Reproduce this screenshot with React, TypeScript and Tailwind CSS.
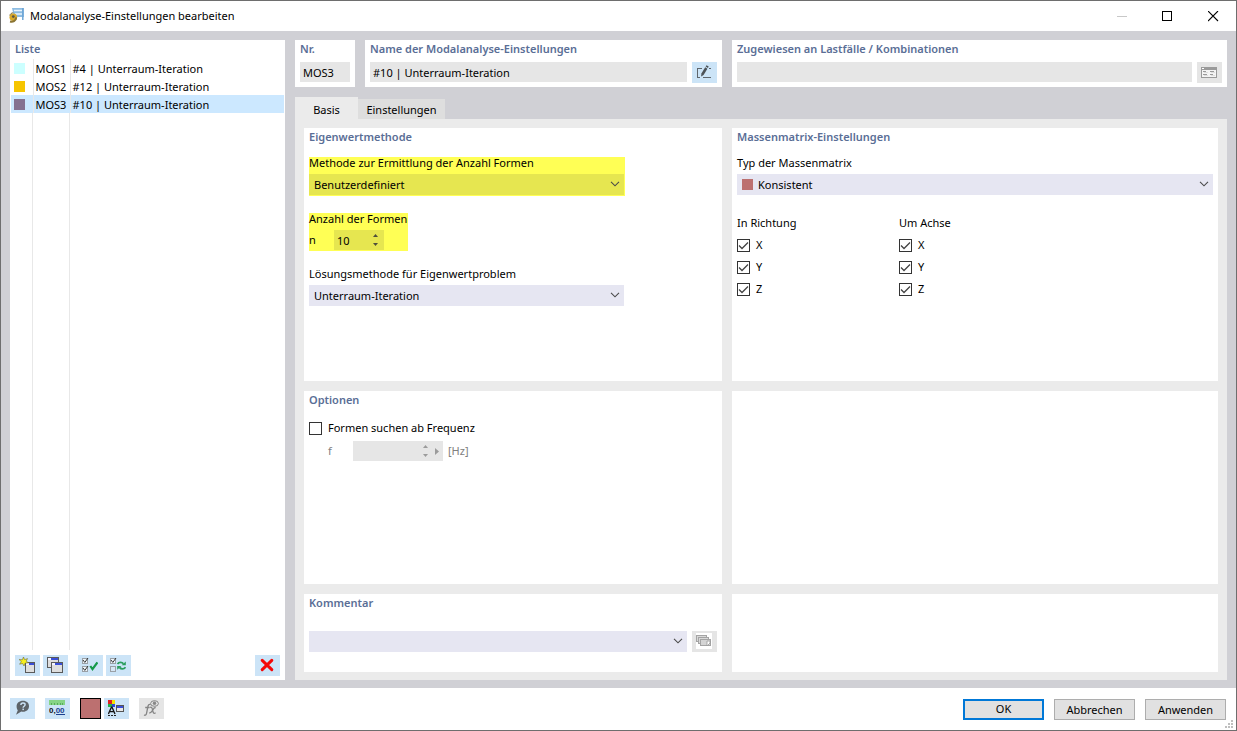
import React, { useState } from "react";

function Icon({ children, smooth }: { children: React.ReactNode; smooth?: boolean }) {
  return (
    <svg
      viewBox="0 0 16 16"
      className="block h-4 w-4"
      fill="none"
      aria-hidden="true"
      shapeRendering={smooth ? "auto" : "crispEdges"}
    >
      {children}
    </svg>
  );
}

function MiniWindow({ x, y, w, h }: { x: number; y: number; w: number; h: number }) {
  return (
    <g>
      <rect x={x + 0.5} y={y + 0.5} width={w - 1} height={h - 1} fill="#dedede" stroke="#5a5a5a" />
      <rect x={x + 1} y={y + 1} width={w - 2} height="2" fill="#f4f4ff" />
      <rect x={x + 4} y={y + 1} width={w - 5} height="2" fill="#3a4fd8" />
    </g>
  );
}

function TinyCheck({ x, y, checked }: { x: number; y: number; checked?: boolean }) {
  return (
    <g>
      <rect x={x + 0.5} y={y + 0.5} width="5" height="5" fill={checked ? "#eef5fb" : "#d5e6f5"} stroke="#9aa0a6" />
      {checked && (
        <path d={`M${x + 1} ${y + 2}l1.800 2.400L${x + 6} ${y}`} stroke="#333" strokeWidth="1" shapeRendering="auto" />
      )}
    </g>
  );
}

function NewIcon() {
  return (
    <Icon>
      <MiniWindow x={6} y={5} w={10} h={11} />
      <path
        d="M4.500 0L5.600 2.600l2.900-1-1.300 2.600L9.400 5.800l-3.200.3L5 9 3.600 6.500.6 7.200l1.700-2.500L0 2.400l3.300.4z"
        fill="#f7f01d"
        stroke="#6b6a3a"
        strokeWidth="0.600"
        shapeRendering="auto"
      />
    </Icon>
  );
}

function CopyIcon() {
  return (
    <Icon>
      <MiniWindow x={0} y={0} w={12} h={11} />
      <MiniWindow x={4} y={5} w={12} h={11} />
    </Icon>
  );
}

function CheckAllIcon() {
  return (
    <Icon>
      <TinyCheck x={0} y={1} checked />
      <TinyCheck x={0} y={9} checked />
      <path d="M8.300 9l2.200 3.200L15.400 5.400" stroke="#169a4a" strokeWidth="2.200" shapeRendering="auto" />
    </Icon>
  );
}

function InvertIcon() {
  return (
    <Icon>
      <TinyCheck x={0} y={1} checked />
      <TinyCheck x={0} y={9} />
      <g shapeRendering="auto">
        <path d="M7.500 7c1.500-2.200 4.500-2.200 6-.2" stroke="#2a9d5c" strokeWidth="1.800" />
        <path d="M15.800 4.400v3.800h-4.200z" fill="#2a9d5c" />
        <path d="M15.500 10.200c-1.500 2.200-4.500 2.200-6 .2" stroke="#2a9d5c" strokeWidth="1.800" />
        <path d="M7.200 12.800V9h4.200z" fill="#2a9d5c" />
      </g>
    </Icon>
  );
}

function DeleteIcon() {
  return (
    <Icon smooth>
      <path d="M3.200 3.400L12.800 12.600M12.800 3.400L3.200 12.600" stroke="#f40808" strokeWidth="3" strokeLinecap="round" />
    </Icon>
  );
}

function HelpIcon() {
  return (
    <Icon smooth>
      <path
        d="M9 .8c3.700 0 6 2.400 6 5.400s-2.300 5.500-6 5.500c-.6 0-1.200-.1-1.700-.2L2 14.800l1.800-4.600C3 9.200 2.600 7.800 2.600 6.200 2.600 3.200 5.300.8 9 .8z"
        fill="#5d6368"
      />
      <path d="M6.900 4.900c0-1.300.9-1.900 2.100-1.900s2.100.7 2.100 1.700c0 1.500-2 1.500-2 3" stroke="#cce4f7" strokeWidth="1.400" />
      <rect x="8.400" y="8.600" width="1.500" height="1.500" fill="#cce4f7" />
    </Icon>
  );
}

function UnitsIcon() {
  return (
    <svg viewBox="0 0 18 16" className="block h-4 w-[18px]" aria-hidden="true">
      <g shapeRendering="crispEdges">
        <rect x="0" y="0" width="16" height="5" fill="#86d486" />
        <path d="M2.500 3v2M5.500 3v2M8.500 3v2M11.500 3v2M13.500 3v2" stroke="#57ab5c" />
        <path d="M7 14.500h9" stroke="#1c3f8f" />
      </g>
      <text x="0" y="13" fontSize="8" fontWeight="700" fontFamily="Liberation Sans, sans-serif" fill="#111">
        0,<tspan fill="#1c3f8f">00</tspan>
      </text>
    </svg>
  );
}

function DisplayIcon() {
  return (
    <svg viewBox="1 0 18 17" className="block h-[17px] w-[18px]" fill="none" aria-hidden="true">
      <g shapeRendering="crispEdges">
        <rect x="1" y="0" width="4" height="4" fill="#e02020" />
        <rect x="5" y="0" width="3" height="4" fill="#f5e400" />
        <rect x="1" y="4" width="4" height="3" fill="#22b14c" />
        <rect x="5" y="4" width="3" height="3" fill="#2f48d8" />
        <rect x="9.500" y="5.500" width="7" height="6" fill="#e9e9e9" stroke="#555" />
        <rect x="10" y="6" width="6" height="2" fill="#3a4fd8" />
        <path d="M1 15.500h2M4 15.500h2M7 15.500h2" stroke="#222" />
      </g>
      <path d="M1.400 14L4.400 7.200h.6L8 14M2.400 11.600h4.400" stroke="#111" strokeWidth="1.300" />
    </svg>
  );
}

function FormulaIcon() {
  return (
    <svg viewBox="0 0 17 17" className="block h-[17px] w-[17px]" fill="none" stroke="#858585" aria-hidden="true">
      <path d="M7.600 4.800C6 3.800 5.200 5 4.800 7l-1.200 6.200c-.4 1.900-1.300 2.400-2.600 1.800M2.200 7.500h4.400" strokeWidth="1.300" />
      <path d="M6.800 7.500c1.800-.9 2.400.2 2.900 2.900s1 3.700 2.900 2.300M12.700 7.500c-1.700-.2-2.400 1.400-3.300 3s-1.700 2.700-3.200 2.400" strokeWidth="1.300" />
      <ellipse cx="11.500" cy="3.500" rx="3.900" ry="2.800" />
      <circle cx="11.500" cy="3.300" r="1.300" fill="#858585" />
    </svg>
  );
}

function EditIcon() {
  return (
    <svg viewBox="1 0 18 16" className="block h-4 w-[18px]" fill="none" aria-hidden="true">
      <path d="M7 4.500H2.500v9H5M8 13.500h8M13.500 4.500h2" stroke="#5f666c" shapeRendering="crispEdges" />
      <path d="M6.400 9.500l3.800-6.200 2.200 1.400-3.800 6.200-2.500 1.500z" fill="#4c5257" />
      <path d="M10.700 2.500l.8-1.300 2.200 1.400-.8 1.300z" fill="#4c5257" />
    </svg>
  );
}

function DialogIcon() {
  return (
    <Icon>
      <rect x="0.500" y="3.500" width="15" height="10" fill="#f4f4f4" stroke="#9a9a9a" />
      <rect x="0" y="3" width="16" height="3" fill="#9a9a9a" />
      <rect x="1" y="4" width="2" height="1" fill="#fff" />
      <path d="M2 7.500h3M9 7.500h4M2 10.500h4M9 10.500h3" stroke="#9a9a9a" />
      <path d="M3 8.500h4M10 8.500h4M3 11.500h4M10 11.500h4" stroke="#dedede" />
    </Icon>
  );
}

function CommentIcon() {
  return (
    <Icon>
      <rect width="16" height="16" fill="#fff" />
      <rect x="0.500" y="2.500" width="10" height="6" fill="#d8d8d8" stroke="#a4a4a4" />
      <rect x="2.500" y="4.500" width="10" height="6" fill="#d8d8d8" stroke="#a4a4a4" />
      <rect x="4.500" y="6.500" width="10" height="6" fill="#d4d4d4" stroke="#a4a4a4" />
      <path d="M11 8h3v2l-3 3z" fill="#fff" stroke="#9a9a9a" strokeWidth="0.800" shapeRendering="auto" />
    </Icon>
  );
}

function AppIcon() {
  return (
    <Icon smooth>
      <path d="M3 0h12v9H5z" fill="#8dbce2" />
      <path d="M5 2.500h8M6 6h7" stroke="#eaf4fc" strokeWidth="1.500" />
      <path d="M13.800 0v12" stroke="#6fa6d6" strokeWidth="1.500" />
      <circle cx="4.300" cy="9.200" r="3.800" fill="#d9a928" />
      <path d="M1 13.600c3 .6 5.800-.4 6.200-4.300" stroke="#8a7434" strokeWidth="2" />
      <circle cx="4.300" cy="8.600" r="1.400" fill="#5b5646" />
      <path d="M0.800 7.500c.5-1.800 1.800-2.700 3.500-2.700" stroke="#7a6a35" />
    </Icon>
  );
}

function IconButton({
  label,
  disabled,
  children,
}: {
  label: string;
  disabled?: boolean;
  children: React.ReactNode;
}) {
  return (
    <button
      type="button"
      aria-label={label}
      disabled={disabled}
      className={`flex h-[21px] w-[25px] shrink-0 items-start pl-1 pt-[2px] ${
        disabled ? "bg-[#e5e5e5]" : "bg-[#cce4f7]"
      }`}
    >
      {children}
    </button>
  );
}

function Heading({ children }: { children: React.ReactNode }) {
  return <h2 className="h-[19px] text-[11px] font-semibold leading-[17px] text-[#5a6e96]">{children}</h2>;
}

function Panel({ title, children }: { title?: string; children?: React.ReactNode }) {
  return (
    <section className="min-w-0 bg-white px-[5px]">
      {title && <Heading>{title}</Heading>}
      {children}
    </section>
  );
}

function Dropdown({
  id,
  label,
  options,
  highlighted,
  swatch,
}: {
  id: string;
  label?: string;
  options: string[];
  highlighted?: boolean;
  swatch?: boolean;
}) {
  return (
    <div className="relative min-w-0 flex-1">
      <select
        id={id}
        aria-label={label}
        className={`block h-[21px] w-full appearance-none pr-6 pt-px outline-none ${
          highlighted ? "bg-[#e6e650]" : "bg-[#e6e6f2]"
        } ${swatch ? "pl-[21px]" : "pl-[5px]"}`}
      >
        {options.map((o) => (
          <option key={o}>{o}</option>
        ))}
      </select>
      {swatch && <span className="pointer-events-none absolute left-[5px] top-[5px] h-[11px] w-[11px] bg-[#bc7070]" />}
      <svg viewBox="0 0 10 6" className="pointer-events-none absolute right-1 top-[7px] h-[6px] w-[10px]" fill="none" aria-hidden="true">
        <path d="M1 .8l4 4 4-4" stroke="#4a4a4a" strokeWidth="1.100" />
      </svg>
    </div>
  );
}

function SpinArrows({ disabled }: { disabled?: boolean }) {
  const fill = disabled ? "#9b9b9b" : "#4e4e3c";
  return (
    <span className="flex w-3 flex-col justify-center gap-1">
      <button type="button" aria-label="Erhöhen" disabled={disabled} className="flex h-1 justify-center">
        <svg viewBox="0 0 5 3" className="h-[3px] w-[5px]">
          <path d="M0 3L2.500 0 5 3z" fill={fill} />
        </svg>
      </button>
      <button type="button" aria-label="Verringern" disabled={disabled} className="flex h-1 items-end justify-center">
        <svg viewBox="0 0 5 3" className="h-[3px] w-[5px]">
          <path d="M0 0L2.500 3 5 0z" fill={fill} />
        </svg>
      </button>
    </span>
  );
}

function CheckBox({ label, defaultChecked }: { label: string; defaultChecked?: boolean }) {
  return (
    <label className="flex h-[22px] items-center gap-[6px]">
      <span className="relative block h-[13px] w-[13px]">
        <input
          type="checkbox"
          defaultChecked={defaultChecked}
          className="peer block h-[13px] w-[13px] appearance-none border border-[#333333] bg-white"
        />
        <svg viewBox="0 0 13 13" className="pointer-events-none absolute inset-0 hidden h-[13px] w-[13px] peer-checked:block" fill="none" aria-hidden="true">
          <path d="M2 6.500l3 3L11 3.500" stroke="#444" strokeWidth="1.300" />
        </svg>
      </span>
      {label}
    </label>
  );
}

const rows = [
  { id: "MOS1", name: "#4 | Unterraum-Iteration", color: "bg-[#ccffff]" },
  { id: "MOS2", name: "#12 | Unterraum-Iteration", color: "bg-[#f6c500]" },
  { id: "MOS3", name: "#10 | Unterraum-Iteration", color: "bg-[#857191]" },
];

const dialogButton = "h-[21px] w-[81px] bg-[#e1e1e1] text-center";

function SettingsList() {
  const [selected, setSelected] = useState("MOS3");
  return (
    <aside className="flex w-[275px] shrink-0 flex-col bg-white px-px pb-1">
      <div className="px-1">
        <Heading>Liste</Heading>
      </div>
      <table className="w-full table-fixed border-collapse">
        <colgroup>
          <col className="w-[22px]" />
          <col className="w-[37px]" />
          <col />
        </colgroup>
        <tbody>
          {rows.map((row) => (
            <tr
              key={row.id}
              onClick={() => setSelected(row.id)}
              className={`h-[18px] ${selected === row.id ? "bg-[#cce8ff]" : ""}`}
            >
              <td className="border-r border-[#e8e8e8] p-0 pl-[3px]">
                <span className={`block h-[11px] w-[11px] ${row.color}`} />
              </td>
              <td className="border-r border-[#e8e8e8] p-0 pl-[2px] pt-[2px] leading-4">{row.id}</td>
              <td className="p-0 pl-[2px] pt-[2px] leading-4">{row.name}</td>
            </tr>
          ))}
        </tbody>
      </table>
      <div className="mb-[5px] flex flex-1">
        <span className="w-[22px] border-r border-[#e8e8e8]" />
        <span className="w-[37px] border-r border-[#e8e8e8]" />
      </div>
      <div className="flex justify-between px-1">
        <div className="flex gap-[10px]">
          <div className="flex gap-[3px]">
            <IconButton label="Neu"><NewIcon /></IconButton>
            <IconButton label="Kopieren"><CopyIcon /></IconButton>
          </div>
          <div className="flex gap-[3px]">
            <IconButton label="Alle auswählen"><CheckAllIcon /></IconButton>
            <IconButton label="Auswahl umkehren"><InvertIcon /></IconButton>
          </div>
        </div>
        <IconButton label="Löschen"><DeleteIcon /></IconButton>
      </div>
    </aside>
  );
}

export default function App() {
  const field = "block h-5 w-full min-w-0 bg-[#e6e6e6] px-[3px] outline-none";
  const fieldLabel = "block h-[17px] leading-[11px]";
  return (
    <div className="flex min-h-screen flex-col border border-[#6e6e6e] bg-white font-['Noto_Sans',sans-serif] text-[11px] text-black">
      <header className="flex h-[30px] items-center justify-between">
        <div className="flex items-center gap-[5px] pl-2">
          <AppIcon />
          <h1 className="text-[11px]">Modalanalyse-Einstellungen bearbeiten</h1>
        </div>
        <div className="flex h-full">
          <button type="button" aria-label="Minimieren" className="flex w-[46px] items-center justify-center">
            <svg viewBox="0 0 11 11" className="h-[11px] w-[11px]"><path d="M1 5.500h10" stroke="#c8c8c8" /></svg>
          </button>
          <button type="button" aria-label="Maximieren" className="flex w-[46px] items-center justify-center">
            <svg viewBox="0 0 11 11" className="h-[11px] w-[11px]" fill="none"><rect x="0.500" y="0.500" width="9" height="9" stroke="#000" /></svg>
          </button>
          <button type="button" aria-label="Schließen" className="flex w-[46px] items-center justify-center">
            <svg viewBox="0 0 11 11" className="h-[11px] w-[11px]"><path d="M0 0l10 10M10 0L0 10" stroke="#000" strokeWidth="1.100" /></svg>
          </button>
        </div>
      </header>

      <div className="flex flex-1 gap-[10px] bg-[#d0d0d5] px-[9px] pb-2 pt-[9px]">
        <SettingsList />

        <main className="flex min-w-0 flex-1 flex-col">
          <div className="grid h-[47px] grid-cols-[60px_357fr_495fr] gap-[10px]">
            <Panel title="Nr.">
              <input aria-label="Nr." readOnly defaultValue="MOS3" className={`mt-[3px] ${field}`} />
            </Panel>
            <Panel title="Name der Modalanalyse-Einstellungen">
              <div className="mt-[3px] flex gap-[5px]">
                <input aria-label="Name der Modalanalyse-Einstellungen" defaultValue="#10 | Unterraum-Iteration" className={field} />
                <IconButton label="Name bearbeiten"><EditIcon /></IconButton>
              </div>
            </Panel>
            <Panel title="Zugewiesen an Lastfälle / Kombinationen">
              <div className="mt-[3px] flex gap-[5px]">
                <input aria-label="Zugewiesen an Lastfälle / Kombinationen" readOnly className={field} />
                <IconButton label="Zuweisung bearbeiten" disabled><DialogIcon /></IconButton>
              </div>
            </Panel>
          </div>

          <div role="tablist" className="mt-[10px] flex h-[22px] items-end">
            <button type="button" role="tab" aria-selected="true" className="h-[22px] w-[63px] bg-[#ebebeb] pt-1">Basis</button>
            <button type="button" role="tab" aria-selected="false" className="h-5 w-[87px] bg-[#dedede] pt-[2px]">Einstellungen</button>
          </div>

          <div className="grid flex-1 grid-cols-[418fr_486fr] grid-rows-[253fr_193fr_78px] gap-[10px] bg-[#ebebeb] px-[9px] pb-2 pt-[9px]">
            <Panel title="Eigenwertmethode">
              <div className="mt-[10px] flex w-[316px] flex-col gap-[17px]">
                <div className="bg-[#ffff55] pb-px pr-px">
                  <label htmlFor="methode" className={fieldLabel}>Methode zur Ermittlung der Anzahl Formen</label>
                  <Dropdown id="methode" options={["Benutzerdefiniert"]} highlighted />
                </div>
                <div className="w-[99px] bg-[#ffff55] pb-px">
                  <h3 className={`whitespace-nowrap ${fieldLabel}`}>Anzahl der Formen</h3>
                  <div className="flex h-5 items-center">
                    <label htmlFor="anzahl" className="w-[25px]">n</label>
                    <span className="flex h-5 w-[50px] bg-[#e6e650] pr-[3px]">
                      <input id="anzahl" defaultValue="10" className="h-5 w-[35px] bg-transparent pl-[3px] outline-none" />
                      <SpinArrows />
                    </span>
                  </div>
                </div>
                <div className="pr-px">
                  <label htmlFor="loesung" className={fieldLabel}>Lösungsmethode für Eigenwertproblem</label>
                  <Dropdown id="loesung" options={["Unterraum-Iteration"]} />
                </div>
              </div>
            </Panel>

            <Panel title="Massenmatrix-Einstellungen">
              <div className="mt-[10px]">
                <label htmlFor="masse" className={fieldLabel}>Typ der Massenmatrix</label>
                <Dropdown id="masse" options={["Konsistent"]} swatch />
              </div>
              <div className="mt-[22px] flex">
                {["In Richtung", "Um Achse"].map((group) => (
                  <fieldset key={group} className="w-[162px]">
                    <legend className={fieldLabel}>{group}</legend>
                    {["X", "Y", "Z"].map((axis) => (
                      <CheckBox key={axis} label={axis} defaultChecked />
                    ))}
                  </fieldset>
                ))}
              </div>
            </Panel>

            <Panel title="Optionen">
              <div className="mt-[7px]">
                <CheckBox label="Formen suchen ab Frequenz" />
              </div>
              <div className="mt-[2px] flex h-5 items-center pl-[19px] text-[#808080]">
                <label htmlFor="frequenz" className="w-[25px]">f</label>
                <span className="flex h-5 w-[90px] items-center bg-[#e6e6e6]">
                  <input id="frequenz" disabled className="h-5 w-[66px] bg-transparent pl-[3px]" />
                  <SpinArrows disabled />
                  <button type="button" aria-label="Weitere Optionen" disabled className="flex w-3 justify-center">
                    <svg viewBox="0 0 4 7" className="h-[7px] w-1"><path d="M0 0l4 3.500L0 7z" fill="#9b9b9b" /></svg>
                  </button>
                </span>
                <span className="pl-[5px]">[Hz]</span>
              </div>
            </Panel>

            <Panel />

            <Panel title="Kommentar">
              <div className="mt-[18px] flex gap-[5px]">
                <Dropdown id="kommentar" label="Kommentar" options={[""]} />
                <IconButton label="Kommentar auswählen" disabled><CommentIcon /></IconButton>
              </div>
            </Panel>

            <Panel />
          </div>
        </main>
      </div>

      <footer className="relative flex h-[42px] items-start justify-between pl-[9px] pr-[10px] pt-[10px]">
        <div className="flex gap-[10px]">
          <IconButton label="Hilfe"><HelpIcon /></IconButton>
          <IconButton label="Einheiten"><UnitsIcon /></IconButton>
          <div className="flex gap-[3px]">
            <button type="button" aria-label="Farbe" className="h-[21px] w-[21px] border border-black bg-[#bc7070]" />
            <IconButton label="Anzeige"><DisplayIcon /></IconButton>
          </div>
          <IconButton label="Formel" disabled><FormulaIcon /></IconButton>
        </div>
        <div className="flex gap-[10px] pt-px">
          <button type="button" className={`border-2 border-[#0078d7] ${dialogButton}`}>OK</button>
          <button type="button" className={`border border-[#adadad] pt-px ${dialogButton}`}>Abbrechen</button>
          <button type="button" className={`border border-[#adadad] pt-px ${dialogButton}`}>Anwenden</button>
        </div>
        <svg viewBox="0 0 8 8" className="absolute bottom-[2px] right-[3px] h-2 w-2" fill="#bfbfbf" aria-hidden="true">
          <path d="M6 0h2v2H6zM3 3h2v2H3zM6 3h2v2H6zM0 6h2v2H0zM3 6h2v2H3zM6 6h2v2H6z" />
        </svg>
      </footer>
    </div>
  );
}
